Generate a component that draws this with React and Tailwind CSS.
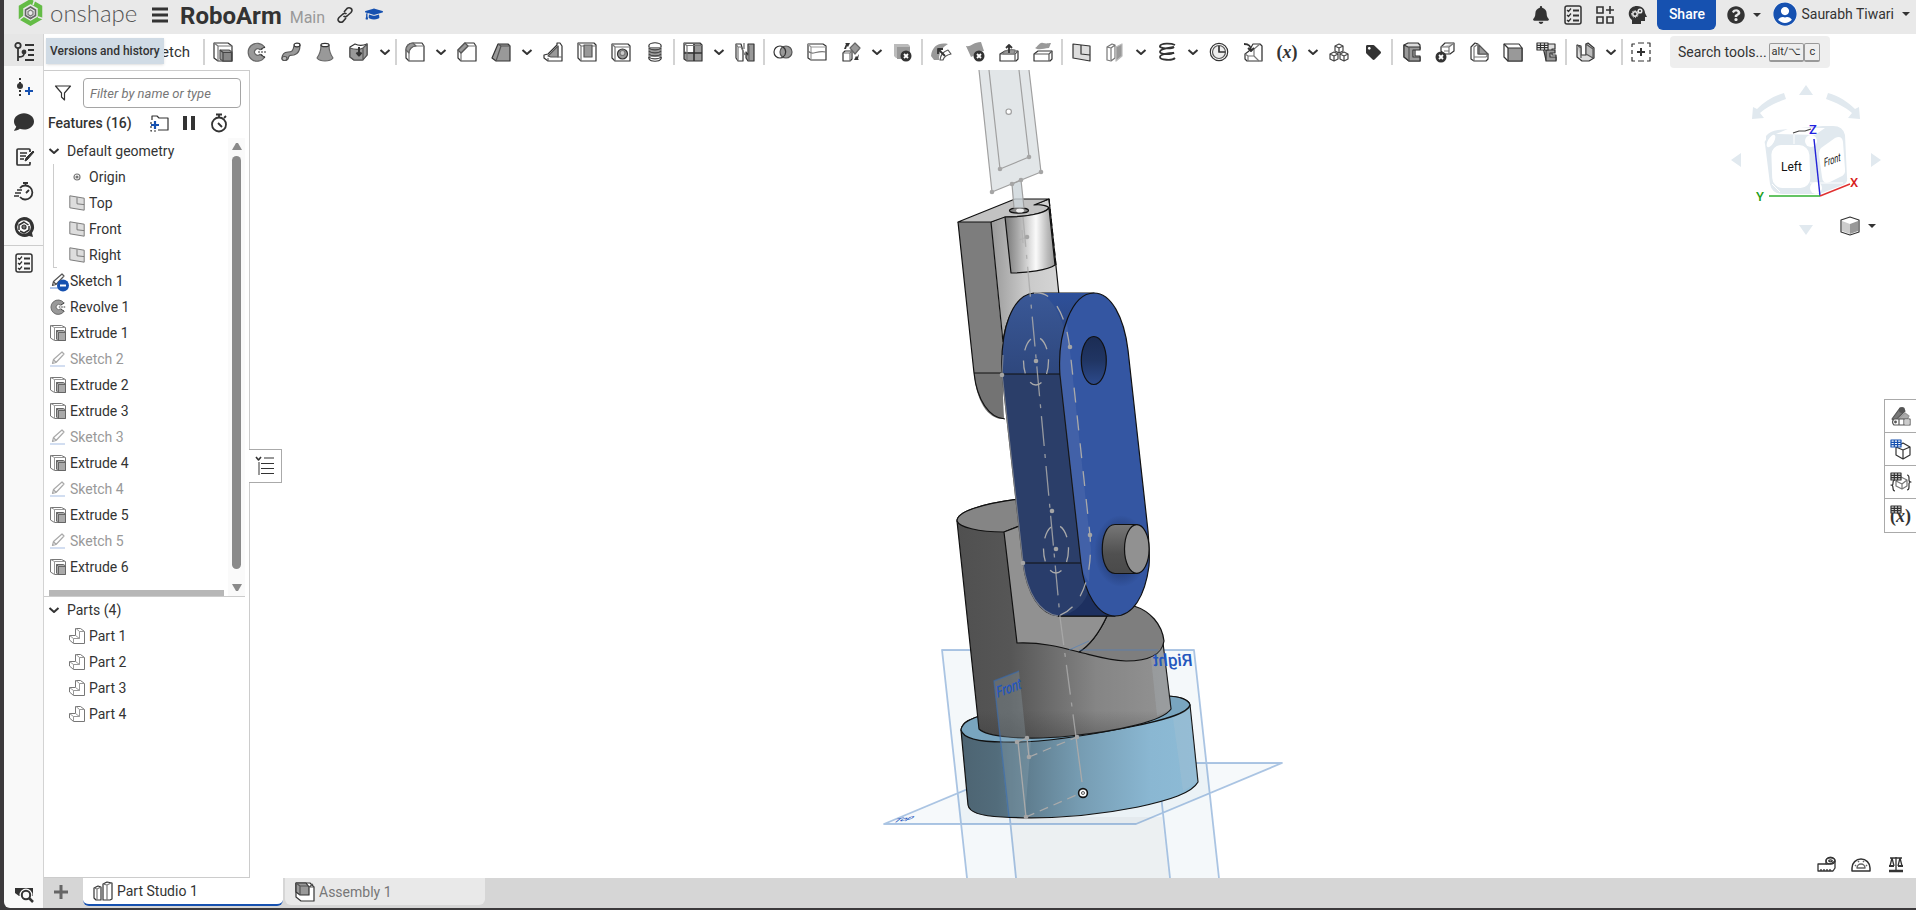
import { FaBell, FaGraduationCap, FaQuestionCircle, FaUserCircle, FaTag, FaComment } from "react-icons/fa";

const G = "#999";
const L = "#ddd";

function Svg({ children, size = 20, box = "0 0 20 20", ...rest }) {
  return (
    <svg width={size} height={size} viewBox={box} fill="none" stroke="#333" strokeWidth="1.2" strokeLinejoin="round" className="shrink-0 overflow-visible" aria-hidden="true" {...rest}>
      {children}
    </svg>
  );
}

const Chevron = ({ size = 12 }) => (
  <Svg size={size} box="0 0 12 12" strokeWidth="2"><path d="M1.5 4 6 8l4.5-4" /></Svg>
);

const Caret = () => (
  <Svg size={8} box="0 0 8 8" stroke="none"><path fill="#333" d="M0 2h8L4 6z" /></Svg>
);

const CloseBadge = ({ x, y }) => (
  <g stroke="none">
    <circle cx={x} cy={y} r="5.5" fill="#333" />
    <path d={`M${x - 2} ${y - 2}l4 4m0-4-4 4`} stroke="#fff" strokeWidth="1.8" />
  </g>
);

// toolbar icons, all on a 20x20 grid
const icons = {
  extrude: <><path fill="#fff" d="M1 1h14l4 3v15H5l-4-3z" /><path d="M1 1l4 3v15M5 4h14" stroke="#777" /><path fill={G} stroke="#555" d="M7 8h9l3 2v9h-9l-3-2z" /><path fill="#888" stroke="#444" d="M10 10.5h8.5V19H10zM7 8l3 2.5" /></>,
  revolve: <><path fill={G} stroke="#666" d="M17.5 5A9 9 0 1 0 17.5 15.5l-4.500-3.200a3.200 3.200 0 1 1 0-4.600z" /><path d="M11 10h9M14 7.5l4-2.500m-4 7.500 4 3" strokeDasharray="2 1" stroke="#333" /></>,
  sweep: <><path fill={G} stroke="#555" d="M1 17c0-5 2-7 6-7s5-1 6-6l6-1c0 6-2 9-6 10-4 0-5 0-6 4-1 2-5 2-6 0z" /><ellipse cx="16" cy="3" rx="3" ry="1.8" fill="#fff" /><ellipse cx="3.5" cy="16.5" rx="2.5" ry="2" fill="#bbb" stroke="#555" /></>,
  loft: <><path fill={G} stroke="#666" d="M6 3c0 6-1 9-4 13 3 4 13 4 16 0-3-4-4-7-4-13z" /><ellipse cx="10" cy="3" rx="4" ry="1.7" fill="#fff" /></>,
  thicken: <><path fill="#fff" d="M1 5l5-3c4 2 7 2 12 0v11l-5 5H5l-4-3z" /><path fill={G} stroke="#555" d="M1 6c5 2 9 2 13 0v12H5l-4-3zM14 6l4-4v11l-4 5z" /><path d="M10 5v8M7.5 10.5 10 13.5l2.500-3" strokeWidth="2" /></>,
  fillet: <><path fill="#fff" d="M1 8c0-4 3-7 7-7h9l2 3v15H4l-3-3z" /><path d="M4 19v-8c0-4 3-7 7-7h8" stroke="#777" /><path fill={G} stroke="#666" d="M1 8c0-4 3-7 7-7l3 3c-4 0-7 3-7 7z" /></>,
  chamfer: <><path fill="#fff" d="M1 8l7-7h9l2 3v15H4l-3-3z" /><path d="M4 19v-8l7-7h8" stroke="#777" /><path fill={G} stroke="#555" d="M1 8l7-7 3 3-7 7z" /></>,
  draft: <><path fill={G} d="M7 2h10l2 2v15H5l-4-3z" /><path d="M5 19L10 4h9M10 4 7 2" stroke="#555" /></>,
  rib: <><path fill="#fff" d="M1 13l4-1 9-9V1h3l2 3v15H5l-4-3z" /><path fill={G} stroke="#555" d="M5 14 15 4v11H8z" /><path d="M15 4v11h4M5 19v-3" stroke="#666" /></>,
  shell: <><path fill="#fff" d="M1 1h16l2 2v16H4l-3-3z" /><path d="M4 4h15M4 4v15M1 1l3 3" stroke="#777" /><path fill={G} stroke="#555" d="M7 3h8v12H7z" /></>,
  hole: <><path fill="#fff" d="M1 2h16l2 2v15H4l-3-3z" /><path d="M4 5h15M4 5v14M1 2l3 3" stroke="#777" /><circle cx="11.5" cy="12" r="5" fill={G} stroke="#333" /><circle cx="11.5" cy="11" r="2.5" fill="#ccc" stroke="#777" /></>,
  thread: <><path fill={G} stroke="#777" d="M4 5h12v11H4z" /><path d="M4 5v-2c2-3 10-3 12 0v2M4 15v2c2 3 10 3 12 0v-2" fill="#fff" /><path d="M4 6c2 2.500 10 2.500 12 0M4 9c2 2.500 10 2.500 12 0M4 12c2 2.500 10 2.500 12 0M4 15c2 2.500 10 2.500 12 0" stroke="#444" /></>,
  pattern: <><path fill={G} d="M1 1h16l2 2v16H4l-3-2z" /><path fill="#fff" stroke="none" d="M2 2h8l1 1v7H3L2 9z" /><path d="M11 2v17M1 11h18" strokeWidth="1.6" /><path d="M3 3.500h16M4 4v15M1 1l3 3" stroke="#777" /></>,
  mirror: <><path fill="#fff" d="M1 2h5l2 7V19H3l-2-3z" /><path d="M3 19V5L1 2m2 3h3l4 8" stroke="#777" /><path fill={G} d="M19 2h-6v11l-2-3v6l2 3h6z" /><path d="M9 1v6m5-3v15" stroke="#666" /></>,
  boolean: <><circle cx="7" cy="10" r="6" /><circle cx="13" cy="10" r="6" fill={G} stroke="#555" /><path d="M10 5a6 6 0 0 1 0 10" /></>,
  split: <><path fill="#fff" d="M1 2h15l3 2v14H4l-3-2z" /><path d="M4 5h15M1 2l3 3v13" stroke="#999" /><path d="M1 9c5 5 8-1 18 1" stroke="#777" /></>,
  transform: <><path fill="#fff" d="M2 11l2-2h7v8l-2 2H2z" /><path d="M2 11h7v8m0-8 2-2" stroke="#777" /><path fill={G} stroke="#666" d="M14 1l5 5-5 6-5-6z" /><path fill="#333" d="M3 7l2-5-1-1h5l-2 4-1-1-1 3zM18 12l-1 5 1 1h-5l2-4 1 1z" stroke="none" /></>,
  deletePart: <><path fill="#bbb" stroke="none" d="M1 2h14l2 2v12H3l-2-2z" /><path fill={G} stroke="none" d="M4 5h13v12H4z" /><CloseBadge x={13} y={14} /></>,
  modifyFillet: <><path fill={G} stroke="none" d="M0 14C1 4 8 0 17 2c-5 3-9 7-9 16H3z" /><path fill="#fff" stroke="#555" d="M9 18c1-6 3-8 8-10l3 4c-5 1-7 3-8 6z" /><path d="M14 14 7 7m0 5V7h5" strokeWidth="1.8" /></>,
  deleteFace: <><path fill={G} stroke="none" d="M1 4c6 1 7-4 15-4l3 9c-7 1-8 4-13 6z" /><CloseBadge x={14} y={14} /></>,
  moveFace: <><path fill="#fff" d="M1 12l5-3h13v8l-2 2H1z" /><path d="M1 12h15v7m0-7 3-3" stroke="#555" /><path fill={G} stroke="#777" d="M4 12c1-4 8-5 12-4l-1 4z" /><path d="M10 11V3M7 6l3-3 3 3" strokeWidth="1.8" /></>,
  offsetSurface: <><path fill={G} stroke="none" d="M2 6c3-1 4-6 8-5s5 0 8 0l-2 5c-5 0-7 2-12 1z" /><path fill="#fff" d="M1 12l4-3h14v8l-2 2H1z" /><path d="M1 12h15v7m0-7 3-3" stroke="#555" /></>,
  plane: <><path fill={L} d="M2 2l17 2v15L2 16z" /><path d="M10 3v9l9 1" /></>,
  frame: <><path fill="#fff" stroke="#777" d="M2 5l5-3 3 1v13l-4 3-4-1zM2 5l4 1v12m0-12 4-3" /><path fill={G} stroke="#bbb" d="M11 5l6-3v12l-6 5z" /></>,
  helix: <><path d="M18 3C14 1 4 1 3 4s12 3 14 1M17 5C12 6 4 6 3 9.500s12 3 14 1M17 11C12 11 3 12 3 15s12 4 15 1" strokeWidth="1.8" /></>,
  curve: <><circle cx="10" cy="10" r="8.7" /><circle cx="10" cy="10" r="6.5" fill="#eee" stroke="#555" /><path d="M10 4v6h6" strokeWidth="1.7" /></>,
  derived: <><path fill="#fff" d="M2 12l4-3 4-7h7l2 2v15H4l-2-2z" /><path d="M2 12l3 2h6V7l6-5M19 4v15M5 14v5M11 14l5 5" stroke="#777" /><path d="M1 2c5 0 7 2 7 7M5 6l3 3 3-3" strokeWidth="1.8" /></>,
  cubes: <>{[[10, 2], [5, 10], [15, 10]].map(([x, y]) => <path key={x} fill="#fff" stroke="#444" d={`M${x - 4} ${y + 2}l4-2 4 2v5l-4 2-4-2zl4 2 4-2m-4 2v5`} />)}</>,
  channel: <><path fill={L} d="M3 3l4-2h10l2 2v4h-5v7h5v5H8l-5-4z" /><path fill={G} d="M3 3l4 2h12v3h-7v7h7v4H8l-5-4z" /><path d="M8 5v14" stroke="#555" /></>,
  trim: <><path fill="#fff" d="M6 5l4-4h9v8l-4 3H9L6 9z" /><path fill="#ccc" stroke="#777" d="M6 5h8l5-4M14 5v7M9 9h5" /><CloseBadge x={6} y={15} /></>,
  gusset: <><path fill="#fff" d="M2 5l4-4 3 1v10h10v5l-2 2H5l-3-2z" /><path d="M5 19V5l4-3M5 15h12l2-3" stroke="#777" /><path fill={G} stroke="#555" d="M10 3v9h9z" /></>,
  endCap: <><path fill="#fff" d="M1 2h15l3 4v13H5l-4-4z" /><path fill={G} d="M5 6h14v13H5z" /><path d="M1 2l4 4" /></>,
  cutList: <><path fill={L} d="M6 5l4-3h8v5h-3v6h4v5H9z" /><path fill={G} d="M9 8h9v3h-5v4h6v4H9z" /><path fill="#fff" d="M0 1h11v7H0zM0 3.300h11M0 5.600h11M3.500 1v7M7.500 1v7" /></>,
  sheetMetal: <><path fill={L} d="M2 3l4 1v9h5V2l2-1 6 5v10l-5 3H7l-5-4z" /><path fill="#bbb" stroke="#555" d="M11 2l7 5v9l-7-4zM2 3l4 3v10" /></>,
  addTool: <><path d="M1 5V2h3M7 1h6M16 1h3v4M19 8v4M19 15v4h-3M13 19H7M4 19H1v-4M1 12V8" /><path d="M10 6v8M6 10h8" strokeWidth="2" /></>,
};

const groups = [
  ["extrude", "revolve", "sweep", "loft", "thicken", "v"],
  ["fillet", "v", "chamfer", "draft", "v", "rib", "shell", "hole", "thread"],
  ["pattern", "v", "mirror"],
  ["boolean", "split", "transform", "v", "deletePart"],
  ["modifyFillet", "deleteFace", "moveFace", "offsetSurface"],
  ["plane", "frame", "v", "helix", "v", "curve", "derived", "variable", "v", "cubes", "tag"],
  ["channel", "trim", "gusset", "endCap", "cutList"],
  ["sheetMetal", "v"],
  ["addTool"],
];

const features = [
  "Sketch 1", "Revolve 1", "Extrude 1", "Sketch 2", "Extrude 2", "Extrude 3",
  "Sketch 3", "Extrude 4", "Sketch 4", "Extrude 5", "Sketch 5", "Extrude 6",
];

const Checklist = () => (
  <Svg strokeWidth="1.5">
    <rect x="2" y="1" width="16" height="18" rx="2" />
    <path d="M10 5.500h6M10 10.500h6M10 15.500h6" strokeWidth="2" />
    <path d="M4 5l1.500 1.500L8 3.500M4 10l1.500 1.500L8 8.500M4 15l1.500 1.500L8 13.500" strokeWidth="1.2" />
  </Svg>
);

const railIcons = [
  ["Comments", <FaComment size={20} color="#333" />],
  ["Notes", <Svg strokeWidth="1.7"><path d="M16 5V3q0-1-1-1H4Q3 2 3 3v14q0 1 1 1h11q1 0 1-1v-2" /><path d="M6 6h7M6 9h6M6 12h4" /><path fill="#333" d="M11 14l1-3 7-7 1 1-7 8z" strokeWidth="1" /></Svg>],
  ["Performance", <Svg strokeWidth="1.8"><path d="M6 6a7 7 0 1 1 0 9M9 1h5M11.500 1v3M12 11l3-3" /><path d="M3 8h5M1 11h6M0 14h5" strokeWidth="1.3" /></Svg>],
  ["Assistant", <Svg><path fill="#333" d="M10 0a10 10 0 1 0 5 19l4 1-1-4A10 10 0 0 0 10 0z" stroke="none" /><circle cx="10" cy="10" r="6.8" fill="#fff" stroke="none" /><path d="M14.500 8 10 5 5 8v5M6 14l4 2 5-3V9" strokeWidth="1.5" /><circle cx="10" cy="10" r="2" fill="#777" /></Svg>],
];

function Header() {
  return (
    <header className="flex h-[34px] shrink-0 items-center bg-[#e9e9e9] pl-[13px] text-[#333]">
      <button aria-label="Onshape home" className="flex items-center pb-[9px]">
        <Svg size={27} box="0 0 27 27" strokeLinejoin="miter">
          <path d="M13.500 2.500l9.500 5.500v11l-9.500 5.500L4 19V8z" stroke="#64bc46" strokeWidth="4.5" />
          <path d="M18 0l-2 6M27 20l-6-2M2 21l5-4" stroke="#e9e9e9" strokeWidth="1.5" />
          <path d="M13.500 8l5 3v5.500l-5 3-5-3V11z" stroke="#666" strokeWidth="1.6" />
          <path d="M13.500 11l2.500 1.500v3L13.500 17 11 15.500v-3z" stroke="#777" strokeWidth="1.2" />
        </Svg>
        <span className="ml-[6px] w-[90px] text-left font-[Lato] text-2xl leading-6 font-light text-[#555]">onshape</span>
      </button>
      <button aria-label="Menu" className="ml-3 pb-1">
        <Svg size={16} box="0 0 16 16" strokeWidth="3"><path d="M0 2h16M0 8h16M0 14h16" /></Svg>
      </button>
      <h1 className="ml-3 pb-[2px] text-2xl leading-8 font-bold">RoboArm</h1>
      <span className="ml-2 pt-[2px] text-base text-[#999]">Main</span>
      <button aria-label="Copy link" className="ml-3 pb-1">
        <Svg size={16} box="0 0 16 16" strokeWidth="1.6"><path d="M7 5l3-3.500q2-1.500 4 0t0 4L10 9Q8 10.500 6.500 9M9 11l-3 3.500q-2 1.500-4 0t0-4L6 7q2-1.500 3.500 0" /></Svg>
      </button>
      <button aria-label="Learning center" className="ml-3 pb-[6px]"><FaGraduationCap size={18} color="#1651b0" /></button>
      <div className="flex-1" />
      <button aria-label="Notifications" className="flex w-8 justify-center pb-1"><FaBell size={18} color="#333" /></button>
      <button aria-label="Tasks" className="flex w-8 justify-center pb-1"><Checklist /></button>
      <button aria-label="Apps" className="flex w-8 justify-center pb-1">
        <Svg strokeWidth="1.6"><path d="M2 2h6v6H2zM2 12h6v6H2zM12 12h6v6h-6zM11 5h8M15 1v8" strokeLinejoin="miter" /></Svg>
      </button>
      <button aria-label="Insights" className="flex w-8 justify-center pb-1">
        <Svg stroke="none"><path fill="#333" d="M5 19v-4C-1 10 2 1 10 1c6 0 8 4 8 7l2 4h-2v4h-4v3z" /><g stroke="#e9e9e9" strokeWidth="1.5"><circle cx="8" cy="9" r="2.2" /><circle cx="13" cy="6" r="1.8" /><path strokeDasharray="1 1.500" d="M4.500 9a3.500 3.500 0 1 1 7 0 3.500 3.500 0 1 1-7 0" strokeWidth="1" /></g></Svg>
      </button>
      <button className="ml-1 h-[30px] w-[59px] self-start rounded-b-md bg-[#1651b0] pb-[2px] text-sm font-medium text-white">Share</button>
      <button aria-label="Help" className="ml-1 flex items-center pb-1 pl-[7px]"><FaQuestionCircle size={18} color="#333" className="mr-2" /><Caret /></button>
      <button className="ml-3 flex items-center pr-[6px] pb-[6px] text-sm">
        <span className="mr-1 rounded-full bg-white"><FaUserCircle size={24} color="#1651b0" /></span>
        <span className="mr-2">Saurabh Tiwari</span>
        <Caret />
      </button>
    </header>
  );
}

function Rail() {
  return (
    <nav className="relative flex w-10 shrink-0 flex-col items-center rounded-bl-md border-r border-[#d3d3d3] bg-[#f9f9f9]">
      <button aria-label="Versions and history" className="flex h-8 w-full items-center justify-center bg-[#e6e6e6] pt-1">
        <Svg strokeWidth="1.8"><circle cx="4" cy="3.5" r="2.7" /><path d="M4 6v13M4 15c5 0 6-1 6-4M11 3h9M11 18h9M14 8h6M14 13h6" /><circle cx="10" cy="10" r="1.5" fill="#333" /></Svg>
      </button>
      <div role="tooltip" className="absolute top-1 left-[42px] z-10 bg-[#d0dbe5] px-1 py-[3px] text-xs leading-5 font-medium whitespace-nowrap text-[#333] shadow-sm">
        Versions and history
      </div>
      <button aria-label="Create version" className="mt-2 flex h-[25px] items-center">
        <Svg><path d="M6 1v18" strokeDasharray="2 2" strokeWidth="2" /><circle cx="6" cy="9" r="3" fill="#333" stroke="none" /><path d="M11 14h8M15 10v8" stroke="#1651b0" strokeWidth="2" /></Svg>
      </button>
      {railIcons.map(([label, icon]) => (
        <button key={label} aria-label={label} className="mt-[10px] flex h-[25px] items-center">{icon}</button>
      ))}
      <hr className="mt-[6px] w-full border-[#ccc]" />
      <button aria-label="Task list" className="mt-[7px]"><Checklist /></button>
      <button aria-label="Find tabs" className="mt-auto mb-1">
        <Svg><path fill="#333" stroke="none" d="M1 4h18v8H5L1 9z" /><circle cx="12" cy="11" r="5" fill="#f9f9f9" stroke="#f9f9f9" strokeWidth="3" /><circle cx="12" cy="11" r="4.2" strokeWidth="2" /><path d="M15 14l4 4" strokeWidth="2.5" /></Svg>
      </button>
    </nav>
  );
}

function Tool({ name }) {
  if (name === "v") return <button aria-label="More tools" className="flex w-[18px] justify-center"><Chevron /></button>;
  return (
    <button aria-label={name} className="flex w-[34px] justify-center">
      {name === "variable" && <span className="font-['Liberation_Serif'] text-lg leading-5 font-bold text-[#333]">(<i>x</i>)</span>}
      {name === "tag" && <FaTag size={15} color="#333" />}
      {icons[name] && <Svg>{icons[name]}</Svg>}
    </button>
  );
}

function Toolbar() {
  return (
    <div className="flex h-9 shrink-0 items-center bg-white">
      <button className="w-[158px] pr-3 text-right text-[15px] text-[#333]">Sketch</button>
      {groups.map((group, i) => (
        <div key={i} className="flex items-center">
          <span className="mx-px h-[26px] w-[2px] bg-[#d3d3d3]" />
          {group.map((name, j) => <Tool key={j} name={name} />)}
        </div>
      ))}
      <button className="ml-3 flex h-8 w-[160px] items-center rounded bg-[#eee] pl-2 text-sm text-[#333]">
        Search tools...
        <kbd className="ml-[2px] rounded-xs border border-b-2 border-[#999] px-[2px] font-[Roboto] text-[11px] leading-4">alt/⌥</kbd>
        <kbd className="rounded-xs border border-b-2 border-[#999] px-1 font-[Roboto] text-[11px] leading-4">c</kbd>
      </button>
    </div>
  );
}

const PencilIcon = ({ active }) => (
  <Svg size={16} box="0 0 16 16" stroke={active ? "#555" : "#aaa"}>
    <path d="M2.500 12.500l1-4L12 1l2 2-8 8.500zM3.500 8.500L6 11.500" />
    <path d="M0 15h15" stroke={active ? "#7fa3dd" : "#b5c8e8"} />
    {active && <><circle cx="13" cy="12.5" r="6" fill="#1651b0" stroke="none" /><path d="M10 12.500h6" stroke="#fff" strokeWidth="2" /></>}
  </Svg>
);

function FeatureIcon({ name, first }) {
  if (name.startsWith("Sketch")) return <PencilIcon active={first} />;
  if (name.startsWith("Revolve")) return <Svg size={16}>{icons.revolve}</Svg>;
  return (
    <Svg size={16} box="0 0 16 16" stroke="#777" strokeWidth="1">
      <path fill="#fff" d="M.5.500h11l4 2v13h-11l-4-2.500z" />
      <path d="M.5.500l4 2v13M4.500 2.500h11" stroke="#999" />
      <path fill="#aaa" stroke="#666" d="M6.500 5.500h7l2 1.500v8.500H8l-1.500-1.500zM8.500 7.500h7M8.500 7.500v8M6.500 5.500l2 2" />
    </Svg>
  );
}

function FeaturePanel() {
  return (
    <aside className="relative z-10 flex w-[206px] shrink-0 flex-col border-t border-r border-b border-[#ccc] bg-white text-sm text-[#333]">
      <div className="flex items-center pt-[7px] pr-2 pl-[10px]">
        <Svg size={18} box="0 0 18 18"><path d="M1.500 2h15l-6 7v7l-3-3V9z" /></Svg>
        <input aria-label="Filter features" placeholder="Filter by name or type" className="ml-[11px] h-[30px] w-0 flex-1 rounded border border-[#a5a5a5] px-[6px] text-[13px] italic placeholder:text-[#777]" />
      </div>
      <div className="flex h-[30px] items-center pl-1">
        <h2 className="w-[101px] font-medium">Features (16)</h2>
        <button aria-label="Add folder"><Svg><path d="M3 7V3h5l2 2h9v12H9" /><path d="M2 9v9h6" strokeDasharray="2 2" /><path d="M2 12h8M6 8v8" stroke="#1651b0" strokeWidth="2.2" /></Svg></button>
        <button aria-label="Rollback" className="ml-[10px]"><Svg strokeWidth="4"><path d="M6 3v14M14 3v14" /></Svg></button>
        <button aria-label="Regeneration times" className="ml-[10px]"><Svg strokeWidth="1.8"><circle cx="10" cy="11.5" r="7" /><path d="M7 1.500h6M10 1v4M9 10l4 4M15 5l2-2" /></Svg></button>
      </div>
      <div className="mr-1 flex h-[459px] shrink-0 border-b border-[#ccc]">
        <div className="flex flex-1 flex-col pl-1">
          <button className="flex h-[26px] shrink-0 items-center gap-[7px]"><Chevron size={12} />Default geometry</button>
          <div className="relative shrink-0 before:absolute before:top-0 before:bottom-0 before:left-[5px] before:w-1 before:border-b before:border-l before:border-[#ccc]">
            {["Origin", "Top", "Front", "Right"].map((name) => (
              <button key={name} className="flex h-[26px] items-center gap-1 pl-[21px]">
                {name === "Origin"
                  ? <Svg size={16} box="0 0 16 16" stroke="#777"><circle cx="8" cy="8" r="3" /><circle cx="8" cy="8" r="1" fill="#555" /></Svg>
                  : <Svg size={16}><path fill={L} stroke="#777" d="M1 1l18 3v15L1 16z" /><path stroke="#777" d="M10 3v8l9 1" /></Svg>}
                {name}
              </button>
            ))}
          </div>
          {features.map((name, i) => (
            <button key={name} className={i > 0 && name.startsWith("Sketch") ? "flex h-[26px] shrink-0 items-center gap-1 pl-[2px] text-[#999]" : "flex h-[26px] shrink-0 items-center gap-1 pl-[2px]"}>
              <FeatureIcon name={name} first={i === 0} />
              {name}
            </button>
          ))}
          <div className="mt-auto ml-px h-[6px] w-[175px] shrink-0 bg-[#b7b7b7]" />
        </div>
        <div className="flex w-[17px] flex-col items-center bg-[#fafafa] pt-1 pb-[3px]">
          <Svg size={10} box="0 0 10 10" stroke="none"><path fill="#8a8a8a" d="M0 8 4 1h2l4 7z" /></Svg>
          <div className="mt-1 h-[413px] w-[9px] rounded-full bg-[#8a8a8a]" />
          <div className="flex-1" />
          <Svg size={10} box="0 0 10 10" stroke="none"><path fill="#8a8a8a" d="M0 1 4 8h2l4-7z" /></Svg>
        </div>
      </div>
      <button className="flex h-[26px] items-center gap-[7px] pl-1"><Chevron size={12} />Parts (4)</button>
      {["Part 1", "Part 2", "Part 3", "Part 4"].map((name) => (
        <button key={name} className="flex h-[26px] items-center gap-1 pl-[25px]">
          <Svg size={16} box="0 0 16 16" stroke="#777" strokeWidth="1"><path fill="#fff" d="M.5 7.500h6v-7h5l4 3v12h-11l-4-3.500z" /><path d="M.5 7.500l4 3h6V3.500L7 .500M10.500 3.500h5M4.500 10.500v5M6.500 7.500l4 3" stroke="#999" /></Svg>
          {name}
        </button>
      ))}
      <button aria-label="Collapse feature list" className="absolute top-[378px] -right-[33px] flex h-[34px] w-[33px] items-center justify-center border border-l-0 border-[#aaa] bg-white">
        <Svg><path d="M9 2h10M6 7.500h13M6 12.500h13M6 17.500h13" /><path d="M1 1l2.500 3L6 1" strokeWidth="1.6" /><path d="M4 6v13" stroke="#999" strokeWidth="2" /></Svg>
      </button>
    </aside>
  );
}

const edge = { stroke: "#111", strokeWidth: 1.2 };
const planeLine = { stroke: "#4a80c4", strokeOpacity: 0.45, strokeWidth: 1.8 };

function Model() {
  return (
    <svg viewBox="250 70 1666 808" className="h-full w-full" fill="none" strokeLinejoin="round" role="img" aria-label="Robot arm model">
      <defs>
        <linearGradient id="ring"><stop offset="0" stopColor="#4d6472" /><stop offset=".15" stopColor="#526c7b" /><stop offset=".5" stopColor="#769cb2" /><stop offset=".8" stopColor="#8ab7d2" /><stop offset="1" stopColor="#8dbbd6" /></linearGradient>
        <linearGradient id="base"><stop offset="0" stopColor="#505050" /><stop offset=".25" stopColor="#565656" /><stop offset=".65" stopColor="#858585" /><stop offset="1" stopColor="#939393" /></linearGradient>
        <linearGradient id="baseShade" x2="0" y2="1"><stop offset=".8" stopColor="#333" stopOpacity="0" /><stop offset="1" stopColor="#333" stopOpacity=".35" /></linearGradient>
        <linearGradient id="cyl"><stop offset="0" stopColor="#777" /><stop offset=".25" stopColor="#a8a8a8" /><stop offset=".62" stopColor="#fafafa" /><stop offset=".85" stopColor="#bbb" /><stop offset="1" stopColor="#999" /></linearGradient>
        <linearGradient id="face"><stop offset="0" stopColor="#999" /><stop offset=".5" stopColor="#c9c9c9" /><stop offset="1" stopColor="#d5d5d5" /></linearGradient>
        <linearGradient id="side" x2="0" y2="1"><stop offset="0" stopColor="#3a5897" /><stop offset=".3" stopColor="#2c4478" /><stop offset="1" stopColor="#2b3e68" /></linearGradient>
        <linearGradient id="roof" x2="0" y2="1"><stop offset="0" stopColor="#2e509a" /><stop offset="1" stopColor="#2a3f6e" /></linearGradient>
        <linearGradient id="bore" x2="0" y2="1"><stop offset="0" stopColor="#1b2c54" /><stop offset=".5" stopColor="#203563" /><stop offset="1" stopColor="#2c4a8c" /></linearGradient>
        <linearGradient id="pin" x2="0" y2="1"><stop offset="0" stopColor="#777" /><stop offset=".6" stopColor="#505050" /><stop offset="1" stopColor="#4a4a4a" /></linearGradient>
        <radialGradient id="shadow"><stop offset=".5" stopColor="#14244c" stopOpacity=".5" /><stop offset="1" stopColor="#14244c" stopOpacity="0" /></radialGradient>
      </defs>

      {/* reference planes */}
      <path d="M942 650h252l25 228H967z" fill="#4a80b0" fillOpacity=".06" />
      <path d="M884 824h252l146-61h-252z" fill="#4a80b0" fillOpacity=".05" />
      <path d="M1009 817h153l7 61h-153z" fill="#666" fillOpacity=".05" />
      <path d="M967 878 942 650h252l25 228M884 824h252l146-61h-252zM1008 800l8 78M1161 795l9 83" {...planeLine} />

      {/* base ring */}
      <path d="M961 730c1-8 9-11 25-16l180-18c14 0 23 4 24 9l8 77c-6 11-28 18-60 25-50 10-100 12-136 10-23-1-33-5-34-12z" fill="url(#ring)" {...edge} />
      <path d="M961 730c1-8 9-11 25-16l180-18c14 0 23 4 24 9-2 9-30 16-60 22-60 12-100 16-126 15-26 0-41-4-43-12z" fill="#79a5bf" {...edge} />

      {/* lower column */}
      <path d="M957 521c0-9 23-17 62-22l90 110c30-5 50 12 54 34l8 66c-8 12-52 22-101 27-50 5-84 0-91-7z" fill="url(#base)" {...edge} />
      <path d="M965 600l198 43 8 66c-8 12-52 22-101 27-50 5-84 0-91-7z" fill="url(#baseShade)" />
      <path d="M957 521c0-9 23-17 62-22v27l-15 6c-26 0-45-5-47-11z" fill="#858585" {...edge} />
      <path d="M1134 606c16 5 28 18 30 35-2 14-17 20-38 20-19-1-34-6-47-9 13-8 22-23 28-36z" fill="#7e7e7e" {...edge} />
      <path d="M1004 532l18-7 36 91h49c-6 13-15 28-28 36-19-5-38-10-62-9z" fill="#919191" {...edge} />
      <path d="M1069 650l20-9M1079 650h79" stroke="#4a80c4" strokeWidth="1" strokeOpacity=".6" />

      {/* planes crossing the base */}
      <path d="M994 681l25-10 7 67 5 2-6 77-17-1z" fill="#9db2c0" fillOpacity=".25" />
      <path d="M1151 658l12-12 8 63-14 7zM1173 718l17-10 8 74-15 9z" fill="#b7c8d4" fillOpacity=".2" />
      <path d="M1019 671l-25 10 15 136" stroke="#356bb3" strokeOpacity=".6" strokeWidth="1.4" />

      {/* upper bracket */}
      <path d="M958 222h33l12 125v72c-14 0-27-20-29-46z" fill="#7d7d7d" />
      <path d="M974 373h28l2 46c-16 1-28-18-30-46z" fill="#737373" />
      <path d="M991 222l14-6 44-17 10 96-25-1c-17 6-28 22-31 48z" fill="url(#face)" {...edge} />
      <path d="M1005 419c-16-1-28-19-31-46L958 222M974 373h28" {...edge} />
      <path d="M958 222l57-23h34l-15 6c7-1 14 1 15 3-4 6-25 9-44 9l-14 5z" fill="#c2c2c2" {...edge} />
      <path d="M1005 217c20 0 39-3 44-9l6 57c-7 5-28 8-44 8z" fill="url(#cyl)" {...edge} />
      <path d="M1049 199l7 66" {...edge} strokeDasharray="7 3" />
      <ellipse cx="1019" cy="210.5" rx="9.5" ry="2.7" fill="#888" {...edge} />
      <ellipse cx="1020" cy="210.5" rx="4" ry="2" fill="#eee" />

      {/* upper sketch */}
      <g stroke="#a0a0a0" strokeWidth="1.2">
        <path d="M979 70l13 122 49-20-12-102z" fill="#dfe3e6" fillOpacity=".9" stroke="none" />
        <path d="M1012 184l9-4 3 28h-10z" fill="#ccd4da" fillOpacity=".8" />
        <path d="M979 70l13 122 49-20-12-102M989 70l11 99 29-12-10-87" />
        <circle cx="1008.7" cy="111.7" r="2.7" fill="#fff" />
      </g>

      {/* blue link */}
      <path d="M1034 293h60l21 323h-57c-18-2-31-22-35-53L1002 374c-2-45 10-79 32-81z" fill="url(#side)" {...edge} />
      <path d="M1036 293h58c-22 0-38 42-34 82h10c0-44-14-80-34-82z" fill="url(#roof)" />
      <path d="M1002 374h58l21 189h-58z" fill="#2b3e69" />
      <path d="M1023 563h58c3 30 17 51 33 53h-56c-18-2-31-22-35-53z" fill="#293d6b" />
      <path d="M1089 590c6 16 15 26 26 26h-54c14-3 24-13 28-26z" fill="#1d3060" />
      <path d="M1002 374h58M1023 563h58M1058 616h57" {...edge} />
      <path d="M1094 293c-22 0-37 40-34 82l21 188c3 30 17 53 34 53 18 0 30-20 34-50 1-12 0-20-1-35l-20-181c-4-33-17-57-34-57z" fill="#3456a2" {...edge} />
      <path d="M1067 323l4 37 20 190-2 32c-4-5-7-12-8-20l-21-187c-1-20 2-38 7-52z" fill="#fff" fillOpacity=".07" />
      <ellipse cx="1093.8" cy="360.5" rx="12.5" ry="24" fill="url(#bore)" {...edge} />
      <ellipse cx="1121" cy="551" rx="27" ry="36" fill="url(#shadow)" />
      <path d="M1137 524.500h-22c-17 0-17 49 0 49h22z" fill="url(#pin)" {...edge} />
      <ellipse cx="1136.8" cy="549" rx="12.3" ry="24.3" fill="#919191" {...edge} />

      {/* sketch lines on top of the solids */}
      <g stroke="#aaa" strokeWidth="1.3">
        <path d="M1023 217l37 400 16 120" strokeDasharray="30 8 4 8" strokeOpacity=".85" />
        <path d="M1034 293c18-3 32 20 36 57l20 185c3 40-8 73-32 81" strokeDasharray="15 13" />
        <path d="M1003 355l-1 19 21 189c4 30 16 50 35 53" strokeOpacity=".6" />
        <ellipse cx="1036" cy="361" rx="12.5" ry="24" strokeDasharray="13 10" />
        <ellipse cx="1056" cy="549" rx="12.5" ry="24" strokeDasharray="13 10" />
        <path d="M1018 742l8 75M1017 742l10-4 2 19M1076 737l6 45" />
        <path d="M1029 757l48-20M1026 817l55-24" strokeDasharray="9 6" />
        <path d="M1019 240l8-3M1022 230l1 13" strokeOpacity=".6" />
      </g>
      <g fill="#a5a5a5">
        {[[992, 192], [1041, 172], [1000, 169], [1029, 157], [1012, 184], [1021, 180], [1027, 237], [1036, 361], [1002, 375], [1070, 347], [1052, 511], [1056, 549], [1090, 535], [1023, 563], [1017, 742], [1027, 738], [1029, 757], [1077, 737], [1026, 817]].map(([x, y]) => (
          <circle key={`${x}-${y}`} cx={x} cy={y} r="2.3" />
        ))}
      </g>
      <circle cx="1083" cy="793" r="5.2" fill="#111" />
      <circle cx="1083" cy="793" r="2.7" fill="#111" stroke="#fff" strokeWidth="1.8" />
      <circle cx="1083" cy="793" r="1" fill="#fff" />

      {/* plane names lie in their planes */}
      <g fill="#2456bd" fontFamily="Roboto, sans-serif" fontSize="17" fontWeight="500" stroke="none">
        <text transform="matrix(-1 0 .1 1 1193 666)">Right</text>
        <text transform="matrix(.66 -.25 .08 1 997 698)" fontSize="16">Front</text>
        <text transform="matrix(1 -.2 -.6 .5 892 823)" fontSize="12">Top</text>
      </g>

      {/* view cube */}
      <g fill="#e1e9ef">
        <path d="M1806 85l7 10h-14zM1806 235l7-10h-14zM1731 160l10-7v14zM1881 160l-10-7v14z" />
        <path d="M1784 93l2 6c-11 4-19 8-26 14l4 5-12 1 1-12 4 2c7-7 16-13 27-16zM1828 93l-2 6c11 4 19 8 26 14l-4 5 12 1-1-12-4 2c-7-7-16-13-27-16z" />
        <path d="M1766 136q4-5 12-6l45-4h10q10 0 12 9l2 42q1 6-4 8l-24 9h-36q-11 0-13-10l-5-40q-1-3 1-4z" />
        <path d="M1776 134l14-6h35l-10 7z" fill="#fff" />
      </g>
      <g fill="#fff">
        <rect x="1772" y="145" width="38" height="43" rx="10" transform="skewX(2) translate(-6 0)" />
        <path d="M1821 148l14-10q7-3 8 4l2 27q1 6-5 8l-10 5q-7 3-8-5l-3-22q0-5 2-7z" />
        <circle cx="1811" cy="141" r="6" /><circle cx="1816" cy="188" r="6" />
        <ellipse cx="1771" cy="141" rx="3" ry="7" transform="rotate(30 1771 141)" />
        <path d="M1772 184l8 8M1794 135v9M1810 183h33" stroke="#fff" />
      </g>
      <path d="M1793 133l6-2h6l6-2" stroke="#444" strokeWidth="1.2" />
      <path d="M1814 139l6 57" stroke="#2323d8" strokeWidth="1.4" />
      <path d="M1820 196h-51" stroke="#30b030" strokeWidth="1.5" />
      <path d="M1820 196l30-12" stroke="#e03030" strokeWidth="1.4" />
      <g fontFamily="Roboto, sans-serif" fontSize="12" fill="#111">
        <text x="1781" y="171">Left</text>
        <text transform="matrix(.6 -.22 0 1 1824 167)">Front</text>
        <g fontSize="13" fontWeight="500">
          <text x="1809" y="134" fill="#2323e0">Z</text>
          <text x="1756" y="201" fill="#20a020">Y</text>
          <text x="1850" y="187" fill="#d82020">X</text>
        </g>
      </g>
    </svg>
  );
}

const Grid = ({ color }) => <path fill={color === "#1651b0" ? "#fff" : "#ddd"} stroke={color} d="M0 1h10v7H0zM0 3.300h10M0 5.600h10M3.300 1v7M6.600 1v7" />;

function Viewport() {
  return (
    <main className="relative min-w-0 flex-1 bg-white">
      <Model />
      <button aria-label="View options" className="absolute top-[146px] right-10 flex items-center gap-2">
        <Svg><path fill="#fff" d="M1 4l9-3 9 3v12l-9 3-9-3z" /><path fill="#ccc" stroke="none" d="M2 5l8 3v10l-8-3z" /><path fill={G} stroke="none" d="M18 5l-8 3v10l8-3z" /></Svg>
        <Caret />
      </button>
      <div className="absolute top-[329px] right-0 w-8 divide-y divide-[#aaa] border border-r-0 border-[#aaa] bg-white">
        <button aria-label="Appearance" className="flex h-[33px] w-full items-center justify-center">
          <Svg stroke="#555"><path fill="#777" d="M1 13l8-11 5 3-10 10z" /><circle cx="11" cy="4" r="3" fill="#555" stroke="none" /><path fill="#aaa" stroke="#999" d="M7 13l7-6 4 3-2 4z" /><path fill="#fff" d="M3 13h16v6H3q-3-3 0-6zM8 13v6M13 13v6" /><path fill="#ccc" stroke="#ccc" d="M14 14h4v4h-4z" /><circle cx="4.5" cy="16" r=".8" fill="#333" /></Svg>
        </button>
        <button aria-label="Configuration" className="flex h-[33px] w-full items-center justify-center">
          <Svg><path fill="#fff" d="M5 8l7-4 7 4v8l-7 4-7-4zl7 3 7-3m-7 3v9" /><Grid color="#1651b0" /></Svg>
        </button>
        <button aria-label="Custom table" className="flex h-[33px] w-full items-center justify-center">
          <Svg><path d="M4 8q-2 0-2 3t-2 2q2 0 2 3t2 3M16 3q2 0 2 3v2q0 2 2 2-2 0-2 2v3q0 3-2 3" /><path fill="#fff" stroke="#777" d="M5 9l5-4 6 3v6l-5 3-6-3zl6 3 5-4m-5 4v5" /><Grid color="#333" /></Svg>
        </button>
        <button aria-label="Variable table" className="relative flex h-[33px] w-full items-center justify-center">
          <span className="font-['Liberation_Serif'] text-lg leading-5 font-bold text-[#333]">(<i>x</i>)</span>
          <span className="absolute top-[6px] left-[6px]"><Svg size={10} box="0 0 10 10"><Grid color="#333" /></Svg></span>
        </button>
      </div>
      <div className="absolute right-[10px] bottom-1 flex items-center gap-[15px]">
        <button aria-label="Measure"><Svg strokeWidth="1.3"><path fill="#fff" d="M2 10h8v-3a4.500 3.500 0 0 1 9 0v7l-2 3H2z" /><ellipse cx="14.5" cy="6.8" rx="4.5" ry="3.3" /><ellipse cx="14.5" cy="6.8" rx="1.8" ry="1" /><path d="M10 10q5 1 9-3M5 17v-2M8 17v-2M11 17v-2M14 17v-2" /></Svg></button>
        <button aria-label="Angle"><Svg strokeWidth="1.5"><path d="M1 17v-3a9 9 0 0 1 18 0v3z" /><path d="M6 14a4 4 0 0 1 8 0zM4 11l1 1M7 7l1 1M13 7l-1 1M16 11l-1 1" stroke="#666" /></Svg></button>
        <button aria-label="Mass properties"><Svg strokeWidth="1.3"><path d="M4 4h12M10 3v13M6 4l-2 8M6 4l2 8M14 4l-2 8M14 4l2 8" /><path d="M3 17h14" strokeWidth="2.5" /><path d="M3 12h5M12 12h5" strokeWidth="2" /></Svg></button>
      </div>
    </main>
  );
}

function TabBar() {
  return (
    <footer className="flex h-[30px] shrink-0 items-start bg-[#d6d6d6] text-[#333]">
      <button aria-label="Add tab" className="flex h-[28px] w-[39px] items-center justify-center pr-[6px]">
        <Svg size={16} box="0 0 16 16" stroke="#666" strokeWidth="3"><path d="M8 1v14M1 8h14" /></Svg>
      </button>
      <button className="flex h-[28px] w-[200px] items-center gap-1 rounded-b-md border-b-2 border-[#1651b0] bg-white pl-[10px] text-sm">
        <Svg><path fill="#fff" d="M1 7l4-2 3 1v13H3l-2-2zM10 3l4-2 5 1v16l-2 1h-7z" /><path d="M1 7l3 1v11m0-11 4-2M10 3l4 1v15m0-15 4-2" stroke="#777" /></Svg>
        Part Studio 1
      </button>
      <button className="ml-[2px] flex h-[27px] w-[200px] items-center gap-1 rounded-b-md bg-[#e9e9e9] pl-[10px] text-sm text-[#777]">
        <Svg><path fill="#fff" d="M1 1h14l4 4v14H6l-5-4z" /><path fill={G} d="M1 1h10l3 4v8H5l-4-3z" /><path d="M5 4h9M5 4v9M1 1l4 3M14 5h5M14 5l4-3" stroke="#555" /></Svg>
        Assembly 1
      </button>
    </footer>
  );
}

export default function App() {
  return (
    <div className="flex h-screen flex-col overflow-hidden border-b-2 border-l-4 border-[#3c3a3c] bg-[#3c3a3c] font-[Roboto,sans-serif]">
      <Header />
      <div className="flex min-h-0 flex-1">
        <Rail />
        <div className="flex min-w-0 flex-1 flex-col">
          <Toolbar />
          <div className="flex min-h-0 flex-1">
            <FeaturePanel />
            <Viewport />
          </div>
          <TabBar />
        </div>
      </div>
    </div>
  );
}
